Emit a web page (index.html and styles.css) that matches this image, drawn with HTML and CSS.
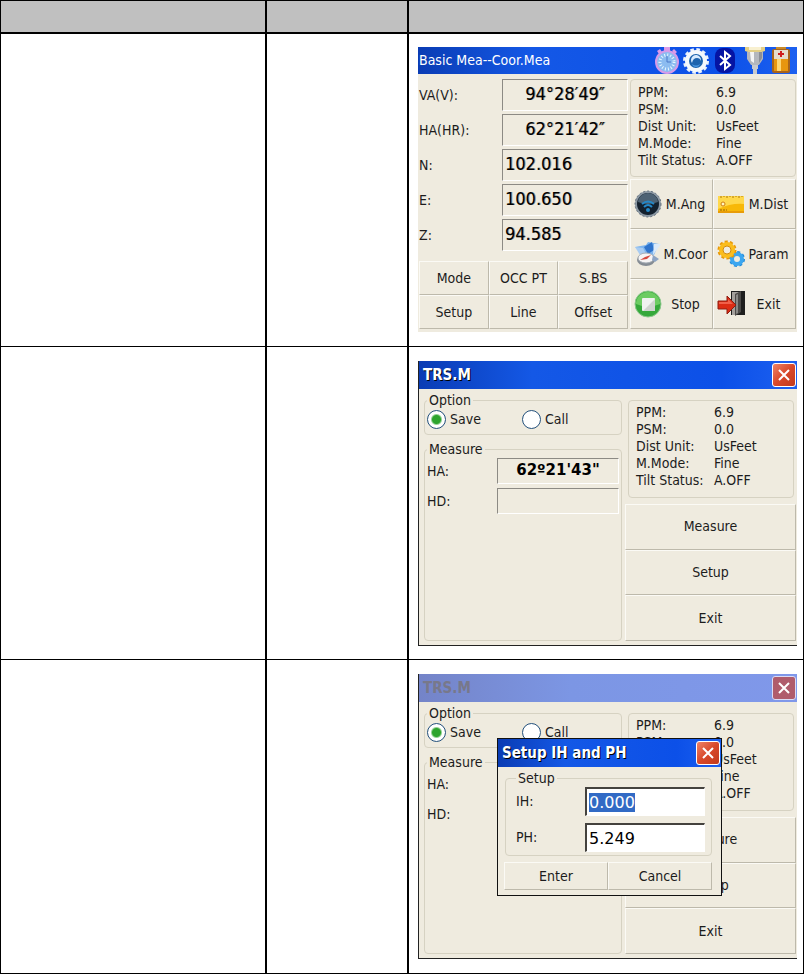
FILE: index.html
```html
<!DOCTYPE html>
<html lang="en">
<head>
  <meta charset="UTF-8">
  <title>Coordinate Measure</title>
  <link rel="stylesheet" href="styles.css">
</head>
<body>
  <table class="steps">
    <colgroup>
      <col class="col-step">
      <col class="col-key">
      <col>
    </colgroup>
    <thead>
      <tr><th></th><th></th><th></th></tr>
    </thead>
    <tbody>
      <tr class="first">
        <td></td>
        <td></td>
        <td>
          <div class="screen">
            <div class="titlebar main-title">
              <span>Basic Mea--Coor.Mea</span>
              <div class="status-icons">
                <svg width="26" height="27" viewBox="0 0 26 27">
                  <path d="M10 0h6v4h-6zM3 4l3-2 2 3-3 2zM20 2l3 3-2 2-3-3z" fill="#dc9be8"/>
                  <circle cx="13" cy="15" r="11" fill="#8cbcf0" stroke="#d69be8" stroke-width="2"/>
                  <circle cx="13" cy="15" r="7" fill="none" stroke="#e6f6ff" stroke-width="3" stroke-dasharray="1 2"/>
                  <path d="M13 9v6h4" fill="none" stroke="#4a78c8" stroke-width="1"/>
                </svg>
                <svg width="26" height="27" viewBox="0 0 26 27">
                  <circle cx="13" cy="14" r="11" fill="none" stroke="#e8f0fa" stroke-width="4" stroke-dasharray="3.4 2.36"/>
                  <circle cx="13" cy="14" r="9" fill="#1d63ad" stroke="#f4f8fc" stroke-width="4"/>
                  <path d="M17 10a5 5 0 0 0-8 6q1-5 5-5 3 0 4 3 0-3-1-4z" fill="#d6eaff"/>
                  <path d="M9 17q4 3 8 0-1 3-4 3t-4-3z" fill="#4c9be4"/>
                </svg>
                <svg width="26" height="27" viewBox="0 0 26 27">
                  <rect x="3" y="1" width="20" height="25" rx="8" fill="#0514a4"/>
                  <path d="M8 9l10 9-5 4V5l5 4-10 9" fill="none" stroke="#fff" stroke-width="2"/>
                </svg>
                <svg class="plug" width="22" height="27" viewBox="0 0 22 27">
                  <path d="M1 0h20v4l-3 1H4L1 4z" fill="#e3cf86"/>
                  <path d="M5 0h12v3H5z" fill="#f8f0d0"/>
                  <path d="M3 5h16v7l-4 6H7l-4-6z" fill="#b4b7bd"/>
                  <path d="M6 5h4v11l-3-2z" fill="#f5f5f5"/>
                  <path d="M8 18h6v4H8zM9 22h4v5H9z" fill="#c8cace"/>
                  <path d="M15 5h3v6l-3 5z" fill="#8c8f96"/>
                </svg>
                <svg width="20" height="27" viewBox="0 0 20 27">
                  <rect x="5" y="0" width="10" height="3" fill="#c98a28"/>
                  <rect x="1" y="2" width="18" height="24" rx="2" fill="#a8641c"/>
                  <rect x="3" y="3" width="14" height="9" fill="#e6dccb"/>
                  <path d="M3 12h14v12H3z" fill="#e8960f"/>
                  <path d="M6 12h4v12H6z" fill="#ffd672"/>
                  <path d="M9 4h2v2h2v2h-2v2H9V8H7V6h2z" fill="#d01c1c"/>
                </svg>
              </div>
            </div>
            <div class="main-body">
              <div class="main-left">
                <div class="readings">
                  <label for="va">VA(V):</label><input class="reading center" id="va" value="94°28′49″" readonly>
                  <label for="hr">HA(HR):</label><input class="reading center" id="hr" value="62°21′42″" readonly>
                  <label for="n">N:</label><input class="reading" id="n" value="102.016" readonly>
                  <label for="e">E:</label><input class="reading" id="e" value="100.650" readonly>
                  <label for="z">Z:</label><input class="reading" id="z" value="94.585" readonly>
                </div>
                <div class="keys">
                  <button>Mode</button><button>OCC PT</button><button>S.BS</button>
                  <button>Setup</button><button>Line</button><button>Offset</button>
                </div>
              </div>
              <div class="main-right">
                <dl class="info">
                  <dt>PPM:</dt><dd>6.9</dd>
                  <dt>PSM:</dt><dd>0.0</dd>
                  <dt>Dist Unit:</dt><dd>UsFeet</dd>
                  <dt>M.Mode:</dt><dd>Fine</dd>
                  <dt>Tilt Status:</dt><dd>A.OFF</dd>
                </dl>
                <div class="actions">
                  <button>
                    <svg width="28" height="28" viewBox="0 0 28 28">
                      <circle cx="14" cy="14" r="12" fill="#14212e" stroke="#8b98a4" stroke-width="2"/>
                      <circle cx="14" cy="14" r="13" fill="none" stroke="#66727e" stroke-width="1" stroke-dasharray="2 2"/>
                      <path d="M4 12a10 9 0 0 1 20 0q-10 4-20 0z" fill="#4d6274"/>
                      <path d="M8 14q6-5 12 0M10 17q4-4 8 0" fill="none" stroke="#2488c8" stroke-width="2"/>
                      <circle cx="14" cy="20" r="2" fill="#2488c8"/>
                    </svg>
                    <span>M.Ang</span>
                  </button>
                  <button>
                    <svg width="28" height="28" viewBox="0 0 28 28">
                      <rect x="1" y="6" width="26" height="17" fill="#f8b808"/>
                      <path d="M1 6h26v8q-13-1-26 5z" fill="#ffd84c"/>
                      <path d="M1 22h26" stroke="#e89c08" stroke-width="2"/>
                      <path d="M4 6v2M7 6v1M10 6v2M13 6v1M16 6v2M19 6v1M22 6v2M25 6v1" stroke="#b07808"/>
                      <circle cx="6" cy="14" r="2" fill="#fff4c0" stroke="#d08010"/>
                      <path d="M3 20h7" stroke="#94600c" stroke-dasharray="2 1"/>
                    </svg>
                    <span>M.Dist</span>
                  </button>
                  <button>
                    <svg width="28" height="28" viewBox="0 0 28 28">
                      <path d="M1 7l11-2 2-3 11 2-5 11-10-1z" fill="#7cb4ee"/>
                      <path d="M10 7l8-5 2 8-6 4z" fill="#2f74cc"/>
                      <path d="M1 7l8 1 3 6-6 1z" fill="#a8ccf2"/>
                      <path d="M20 4l7 0-8 11z" fill="#dbeafa"/>
                      <ellipse cx="12" cy="20" rx="9" ry="6" fill="#858c94"/>
                      <ellipse cx="12" cy="18" rx="8" ry="5" fill="#f6f4f4" stroke="#a4acb4"/>
                      <path d="M6 20l5-3 6-2-4 4z" fill="#d44a40"/>
                      <path d="M19 15l6 4-4 3-3-2z" fill="#8da4c4"/>
                    </svg>
                    <span>M.Coor</span>
                  </button>
                  <button>
                    <svg width="28" height="28" viewBox="0 0 28 28">
                      <circle cx="20" cy="19" r="7" fill="none" stroke="#1f88d8" stroke-width="2" stroke-dasharray="3 2.5"/>
                      <circle cx="20" cy="19" r="5" fill="none" stroke="#3ba6f0" stroke-width="4"/>
                      <circle cx="10" cy="10" r="8" fill="none" stroke="#e89808" stroke-width="3" stroke-dasharray="3 2.03"/>
                      <circle cx="10" cy="10" r="6" fill="none" stroke="#fbbd1c" stroke-width="4"/>
                      <circle cx="10" cy="10" r="4" fill="#f0ece0" stroke="#d48c08"/>
                    </svg>
                    <span>Param</span>
                  </button>
                  <button>
                    <svg width="28" height="28" viewBox="0 0 28 28">
                      <circle cx="14" cy="14" r="13" fill="#35a83a" stroke="#8cc88c"/>
                      <path d="M2 14a12 12 0 0 1 24 0q-12 5-24 0z" fill="#6ccc62"/>
                      <rect x="8" y="8" width="13" height="13" rx="1" fill="#f0f2f0"/>
                      <path d="M21 9v12H9z" fill="#d0d4d0"/>
                    </svg>
                    <span>Stop</span>
                  </button>
                  <button>
                    <svg width="28" height="28" viewBox="0 0 28 28">
                      <path d="M14 1h14v24H14z" fill="#1e1e1e"/>
                      <path d="M15 2h8l-4 3v20h-4z" fill="#a4a09c"/>
                      <path d="M18 4l6-3v21l-6 4z" fill="#4c4a48"/>
                      <path d="M19 5l2-1v19l-2 1z" fill="#8a8886"/>
                      <path d="M1 11h9V6l9 9-9 9v-5H1z" fill="#dc2c14" stroke="#8e1c10"/>
                      <path d="M2 12h9V9l5 5H2z" fill="#f0604a"/>
                    </svg>
                    <span>Exit</span>
                  </button>
                </div>
              </div>
            </div>
          </div>
        </td>
      </tr>
      <tr>
        <td></td>
        <td></td>
        <td>
          <div class="screen framed">
            <div class="titlebar">
              <span class="caption">TRS.M</span>
              <button class="close" aria-label="Close"><svg width="16" height="16" viewBox="0 0 16 16"><path d="M3 3l10 10M13 3L3 13" stroke="#fff" stroke-width="2"/></svg></button>
            </div>
            <div class="trs-body">
              <div class="trs-left">
                <fieldset class="option">
                  <legend>Option</legend>
                  <label><input type="radio" name="mode1" checked>Save</label>
                  <label><input type="radio" name="mode1">Call</label>
                </fieldset>
                <fieldset class="measure">
                  <legend>Measure</legend>
                  <label for="ha1">HA:</label><input class="reading strong" id="ha1" value="62º21'43&quot;" readonly>
                  <label for="hd1">HD:</label><input class="reading strong" id="hd1" readonly>
                </fieldset>
              </div>
              <div class="trs-right">
                <dl class="info">
                  <dt>PPM:</dt><dd>6.9</dd>
                  <dt>PSM:</dt><dd>0.0</dd>
                  <dt>Dist Unit:</dt><dd>UsFeet</dd>
                  <dt>M.Mode:</dt><dd>Fine</dd>
                  <dt>Tilt Status:</dt><dd>A.OFF</dd>
                </dl>
                <div class="stack">
                  <button>Measure</button>
                  <button>Setup</button>
                  <button>Exit</button>
                </div>
              </div>
            </div>
          </div>
        </td>
      </tr>
      <tr class="last">
        <td></td>
        <td></td>
        <td>
          <div class="screen framed">
            <div class="titlebar inactive">
              <span class="caption">TRS.M</span>
              <button class="close" aria-label="Close"><svg width="16" height="16" viewBox="0 0 16 16"><path d="M3 3l10 10M13 3L3 13" stroke="#fff" stroke-width="2"/></svg></button>
            </div>
            <div class="trs-body">
              <div class="trs-left">
                <fieldset class="option">
                  <legend>Option</legend>
                  <label><input type="radio" name="mode2" checked>Save</label>
                  <label><input type="radio" name="mode2">Call</label>
                </fieldset>
                <fieldset class="measure">
                  <legend>Measure</legend>
                  <label for="ha2">HA:</label><input class="reading strong" id="ha2" readonly>
                  <label for="hd2">HD:</label><input class="reading strong" id="hd2" readonly>
                </fieldset>
              </div>
              <div class="trs-right">
                <dl class="info">
                  <dt>PPM:</dt><dd>6.9</dd>
                  <dt>PSM:</dt><dd>0.0</dd>
                  <dt>Dist Unit:</dt><dd>UsFeet</dd>
                  <dt>M.Mode:</dt><dd>Fine</dd>
                  <dt>Tilt Status:</dt><dd>A.OFF</dd>
                </dl>
                <div class="stack">
                  <button>Measure</button>
                  <button>Setup</button>
                  <button>Exit</button>
                </div>
              </div>
            </div>
            <div class="dialog" role="dialog" aria-label="Setup IH and PH">
              <div class="titlebar">
                <span class="caption">Setup IH and PH</span>
                <button class="close" aria-label="Close"><svg width="16" height="16" viewBox="0 0 16 16"><path d="M3 3l10 10M13 3L3 13" stroke="#fff" stroke-width="2"/></svg></button>
              </div>
              <fieldset class="heights">
                <legend>Setup</legend>
                <label for="ih">IH:</label><input id="ih" value="0.000">
                <label for="ph">PH:</label><input id="ph" value="5.249">
              </fieldset>
              <div class="dialog-keys">
                <button>Enter</button><button>Cancel</button>
              </div>
            </div>
          </div>
        </td>
      </tr>
    </tbody>
  </table>

  <script>
    // the dialog opens with the first height selected
    document.getElementById('ih').select();
  </script>
</body>
</html>
```
FILE: styles.css
```css
* { box-sizing: border-box; }
body { margin: 0; background: #fff; color: #1c1c1c; font: 14px/17px "DejaVu Sans Condensed", "Noto Sans", sans-serif; }
button, input { font: inherit; color: inherit; margin: 0; border-radius: 0; }
svg { display: block; flex: none; }

/* procedure table */
.steps { width: 100%; table-layout: fixed; border-spacing: 0; border-left: 1px solid #000; border-top: 1px solid #000; }
.col-step { width: 266px; }
.col-key { width: 142px; }
th, td { padding: 0; border-right: 2px solid #000; border-bottom: 1px solid #000; vertical-align: top; }
th:last-child, td:last-child { border-right-width: 1px; }
th { height: 33px; background: #c0c0c0; border-bottom-width: 2px; }
td:last-child { padding: 14px 6px 13px 9px; }
.first td:last-child { padding: 13px 6px 14px 9px; }
.last td:last-child { padding-bottom: 14px; }

/* device screens */
.screen { position: relative; display: flex; flex-direction: column; height: 285px; background: #efebdf; }
.framed { border-left: 1px solid #222; border-bottom: 1px solid #222; }
.titlebar { display: flex; align-items: center; justify-content: space-between; height: 28px; flex: none; padding: 0 1px 0 4px; color: #fff; background: linear-gradient(90deg, #0a3cb4, #1458e6 30%, #0c50e8 80%, #1c60f0); }
.main-title { height: 27px; padding: 0 6px 0 1px; }
.caption { font-size: 15px; font-weight: bold; text-shadow: 1px 1px 0 #000; }
.status-icons { display: flex; gap: 3px; }
.plug { margin-left: 3px; margin-right: 2px; }
.close { display: grid; place-items: center; width: 24px; height: 24px; padding: 0; border: 1px solid #fff; border-radius: 3px; background: linear-gradient(135deg, #ee8468, #d8482a 50%, #c23a1c); }
.inactive { background: linear-gradient(90deg, #7484c8, #7c96e4 40%, #8098ea); }
.inactive .caption { color: #78788a; text-shadow: none; }
.inactive .close { background: #b05c6c; border-color: #dcdcf4; }

.screen button:not(.close) { padding: 0; background: #efebdf; border: 1px solid; border-color: #fbfaf5 #bdb9ab #bdb9ab #fbfaf5; }
.reading { width: 100%; min-width: 0; padding: 0 2px 3px; background: #efebdf; border: 1px solid; border-color: #8c8a84 #fff #fff #8c8a84; font-size: 18px; color: #000; text-shadow: 1px 0 0 rgba(0, 0, 0, .4); outline: 0; }
.center { text-align: center; }
.strong { font-family: "DejaVu Sans", sans-serif; font-size: 15px; font-weight: bold; text-align: center; text-shadow: none; }
.info { display: grid; grid-template-columns: 78px 1fr; align-content: start; margin: 0; border: 1px solid #d6d2c2; border-radius: 4px; }
.info dd { margin: 0; }

/* coordinate measurement */
.main-body { flex: 1; display: grid; grid-template-columns: 209px 1fr; gap: 2px; padding: 5px 1px 3px; }
.main-left, .main-right { display: flex; flex-direction: column; justify-content: space-between; }
.readings { display: grid; grid-template-columns: 83px 1fr; grid-auto-rows: 32px; gap: 3px 0; align-items: center; }
.readings .reading { height: 32px; }
.keys { display: grid; grid-template-columns: repeat(3, 1fr); grid-auto-rows: 34px; }
.main-right .info { height: 98px; padding: 4px 7px; }
.actions { display: grid; grid-template-columns: repeat(2, 1fr); grid-auto-rows: 50px; }
.actions button { display: flex; align-items: center; }
.screen .actions button { padding: 0 3px; }
.actions span { flex: 1; text-align: center; white-space: nowrap; }

/* orientation setup */
.trs-body { flex: 1; display: grid; grid-template-columns: 198px 1fr; gap: 3px; padding: 3px 1px 4px 5px; }
.trs-left, .trs-right { display: flex; flex-direction: column; }
fieldset { margin: 0; min-width: 0; border: 1px solid #d6d2c2; border-radius: 4px; }
legend { padding: 0 2px; }
.option { display: flex; height: 43px; padding: 1px 2px 2px; }
.option label { display: flex; align-items: center; width: 95px; gap: 4px; }
.option input { appearance: none; width: 19px; height: 19px; border: 1px solid #23507c; border-radius: 50%; background: #fff; }
.option input:checked { background: radial-gradient(circle, #2da42d 4px, #fff 6px); }
.measure { flex: 1; display: grid; grid-template-columns: 70px 1fr; grid-auto-rows: 26px; align-content: start; align-items: center; gap: 4px 0; margin-top: 6px; padding: 0 2px; }
.measure .reading { height: 26px; }
.trs-right .info { height: 98px; margin: 8px 2px 6px 3px; padding: 3px 7px; }
.stack { flex: 1; display: grid; grid-template-rows: repeat(3, 1fr); }

/* height dialog, over the screen */
.dialog { position: absolute; left: 78px; top: 64px; width: 225px; padding-bottom: 5px; background: #efebdf; border: 1px solid #111; }
.heights { display: grid; grid-template-columns: 69px 1fr; grid-auto-rows: 29px; gap: 7px 0; align-items: center; margin: 3px 9px 6px 7px; padding: 0 6px 3px 10px; }
.heights input { width: 100%; height: 29px; padding: 0 2px; background: #fff; border: 1px solid; border-width: 2px 1px 1px 2px; border-color: #44423e #fff #fff #44423e; outline: 0; font-family: "DejaVu Sans", sans-serif; font-size: 16px; color: #000; }
.heights input::selection { background: #316ac5; color: #fff; }
.dialog-keys { display: grid; grid-template-columns: 1fr 1fr; grid-auto-rows: 28px; margin: 0 9px 0 6px; }
```
